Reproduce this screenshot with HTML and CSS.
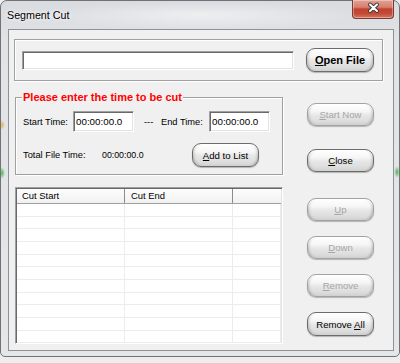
FILE: index.html
```html
<!DOCTYPE html>
<html lang="en">
<head>
    <meta charset="UTF-8">
    <meta name="viewport" content="width=device-width, initial-scale=1.0">
    <title>Segment Cut</title>
    <link rel="stylesheet" href="styles.css">
</head>
<body>
    <div class="window">
        <div class="titlebar">
            <span class="title">Segment Cut</span>
            <button class="btn-close" title="Close">
                <svg width="42" height="19" viewBox="0 0 42 19">
                    <path d="M18 5.5 L25 12 M25 5.5 L18 12" stroke="#3b3b3b" stroke-width="4" stroke-linecap="round"/>
                    <path d="M18 5.5 L25 12 M25 5.5 L18 12" stroke="#ffffff" stroke-width="2" stroke-linecap="round"/>
                </svg>
            </button>
        </div>

        <div class="client">
            <div class="group group-file">
                <input type="text" class="edit edit-path">
                <button class="btn btn-bold"><u>O</u>pen File</button>
            </div>

            <div class="main">
                <div class="left">
                    <fieldset class="group-time">
                        <legend>Please enter the time to be cut</legend>
                        <div class="row">
                            <label class="lbl-start">Start Time:</label>
                            <input type="text" class="edit edit-time" value="00:00:00.0">
                            <span class="dash">---</span>
                            <label class="lbl-end">End Time:</label>
                            <input type="text" class="edit edit-time" value="00:00:00.0">
                        </div>
                        <div class="row row-total">
                            <span class="lbl-total">Total File Time:</span>
                            <span class="total-value">00:00:00.0</span>
                            <button class="btn"><u>A</u>dd to List</button>
                        </div>
                    </fieldset>

                    <div class="listview">
                        <div class="lv-header">
                            <div class="lv-col">Cut Start</div>
                            <div class="lv-col">Cut End</div>
                            <div class="lv-col lv-fill"></div>
                        </div>
                        <div class="lv-body">
                            <div class="lv-row"><div class="lv-cell"></div><div class="lv-cell"></div><div class="lv-cell lv-fill"></div></div>
                            <div class="lv-row"><div class="lv-cell"></div><div class="lv-cell"></div><div class="lv-cell lv-fill"></div></div>
                            <div class="lv-row"><div class="lv-cell"></div><div class="lv-cell"></div><div class="lv-cell lv-fill"></div></div>
                            <div class="lv-row"><div class="lv-cell"></div><div class="lv-cell"></div><div class="lv-cell lv-fill"></div></div>
                            <div class="lv-row"><div class="lv-cell"></div><div class="lv-cell"></div><div class="lv-cell lv-fill"></div></div>
                            <div class="lv-row"><div class="lv-cell"></div><div class="lv-cell"></div><div class="lv-cell lv-fill"></div></div>
                            <div class="lv-row"><div class="lv-cell"></div><div class="lv-cell"></div><div class="lv-cell lv-fill"></div></div>
                            <div class="lv-row"><div class="lv-cell"></div><div class="lv-cell"></div><div class="lv-cell lv-fill"></div></div>
                            <div class="lv-row"><div class="lv-cell"></div><div class="lv-cell"></div><div class="lv-cell lv-fill"></div></div>
                            <div class="lv-row"><div class="lv-cell"></div><div class="lv-cell"></div><div class="lv-cell lv-fill"></div></div>
                            <div class="lv-row"><div class="lv-cell"></div><div class="lv-cell"></div><div class="lv-cell lv-fill"></div></div>
                        </div>
                    </div>
                </div>

                <div class="side">
                    <button class="btn btn-start" disabled><u>S</u>tart Now</button>
                    <button class="btn btn-closedlg"><u>C</u>lose</button>
                    <button class="btn btn-up" disabled><u>U</u>p</button>
                    <button class="btn btn-down" disabled><u>D</u>own</button>
                    <button class="btn btn-remove" disabled><u>R</u>emove</button>
                    <button class="btn btn-removeall">Remove <u>A</u>ll</button>
                </div>
            </div>
        </div>
    </div>
</body>
</html>
```

FILE: styles.css
```css
body {
    margin: 0;
    background-color: #ededed;
    font-family: "Liberation Sans", Arial, sans-serif;
    font-size: 9.3px;
    color: #000;
}
.window {
    width: 400px;
    height: 357px;
    box-sizing: border-box;
    padding: 0 5px 0 7px;
    border: 1px solid #707274;
    border-radius: 7px 7px 5px 5px;
    /* desktop colours bleeding through the glass frame */
    background:
        radial-gradient(3px 5px at 1px 124px, rgba(230,170,40,0.8), rgba(230,170,40,0)),
        radial-gradient(3px 6px at 1px 172px, rgba(40,170,40,0.8), rgba(40,170,40,0)),
        radial-gradient(3px 6px at 396px 171px, rgba(40,170,40,0.8), rgba(40,170,40,0)),
        radial-gradient(ellipse 160px 14px at 200px 14px, rgba(255,255,255,0.5), rgba(255,255,255,0)),
        linear-gradient(to bottom, #d8dbdf, #e1e3e6 40px, #e4e6e8);
}
.titlebar {
    height: 28px;
    display: flex;
    align-items: center;
    justify-content: space-between;
}
.title {
    margin-left: -1px;
    font-size: 10.7px;
    text-shadow: 0 0 6px #fff, 0 0 3px #fff;
}
.btn-close {
    align-self: flex-start;
    margin-top: -1px;
    width: 42px;
    height: 19px;
    padding: 0;
    border: 1px solid #7b3a33;
    border-top: none;
    border-radius: 0 0 4px 4px;
    background: linear-gradient(to bottom, #e2a194 0%, #d6806f 40%, #c4402f 50%, #c24a36 75%, #d8765a 100%);
    box-shadow: inset 0 0 0 1px rgba(255,255,255,0.35);
}
.btn-close svg {
    display: block;
    margin: -1px 0 0 -1px;
}
.client {
    height: 322px;
    box-sizing: border-box;
    padding: 9px 0 0 5px;
    border: 1px solid #8e9296;
    background-color: #f0f0f0;
}
.group {
    box-sizing: border-box;
    border: 1px solid #a0a0a0;
    box-shadow: inset 1px 1px 0 #fff, 1px 1px 0 #fff;
}
.group-file {
    width: 369px;
    height: 42px;
    display: flex;
    align-items: center;
    padding-left: 7px;
}
.edit {
    box-sizing: border-box;
    margin: 0;
    padding: 0 2px;
    border: 1px solid;
    border-color: #a0a0a0 #fff #fff #a0a0a0;
    box-shadow: inset 1px 1px 0 #696969, inset -1px -1px 0 #e3e3e3;
    background-color: #fff;
    font-family: "Liberation Sans", Arial, sans-serif;
    color: #000;
    outline: none;
}
.edit-path {
    width: 272px;
    height: 19px;
    margin-right: 12px;
}
.edit-time {
    width: 61px;
    height: 21px;
    font-size: 9.8px;
}
.btn {
    width: 67px;
    height: 23px;
    box-sizing: border-box;
    padding: 0;
    border: 1px solid #6c6c6c;
    border-radius: 9px;
    background: linear-gradient(to bottom, #ffffff 0%, #f6f6f6 35%, #e6e6e6 55%, #dcdcdc 85%, #e6e6e6 100%);
    box-shadow:
        inset 0 1px 0 #fff,
        inset 3px 0 3px -2px rgba(0,0,0,0.18),
        inset -3px 0 3px -2px rgba(0,0,0,0.18),
        inset 0 -2px 2px rgba(0,0,0,0.08),
        0 1px 1px rgba(0,0,0,0.25);
    font-family: "Liberation Sans", Arial, sans-serif;
    font-size: 9.6px;
    color: #000;
}
.btn:disabled {
    color: #a6a6a6;
    border-color: #a2a2a2;
}
.btn-bold {
    width: 68px;
    height: 24px;
    font-weight: bold;
    font-size: 11px;
}
.main {
    display: flex;
    margin-left: 1px;
}
.left {
    width: 268px;
}
.group-time {
    margin: 10px 0 0;
    padding: 7px 0 7px 7px;
    min-width: 0;
    border: 1px solid #a0a0a0;
    box-shadow: inset 1px 1px 0 #fff, 1px 1px 0 #fff;
}
.group-time legend {
    margin-left: -1px;
    padding: 0 1px;
    background-color: #f0f0f0;
    color: #ff0000;
    font-weight: bold;
    font-size: 11px;
    line-height: 13px;
}
.row {
    display: flex;
    align-items: center;
    height: 21px;
}
.lbl-start {
    width: 50px;
}
.dash {
    width: 27px;
    box-sizing: border-box;
    padding-left: 10px;
}
.lbl-end {
    width: 48px;
}
.row-total {
    height: 24px;
    margin-top: 11px;
}
.lbl-total {
    width: 79px;
}
.total-value {
    width: 90px;
    font-size: 8.8px;
}
.row-total .btn {
    height: 24px;
}
.listview {
    margin-top: 12px;
    height: 157px;
    box-sizing: border-box;
    overflow: hidden;
    border: 1px solid;
    border-color: #a0a0a0 #fff #fff #a0a0a0;
    box-shadow: inset 1px 1px 0 #696969, inset -1px -1px 0 #e3e3e3;
    padding: 1px;
    background-color: #fff;
}
.lv-header {
    display: flex;
    height: 15px;
    box-sizing: border-box;
    border-bottom: 1px solid #a0a0a0;
    background: linear-gradient(to bottom, #fdfdfd, #f1f1f1);
}
.lv-col {
    width: 108px;
    box-sizing: border-box;
    padding-left: 5px;
    border-right: 1px solid #8c8c8c;
    line-height: 14px;
    font-size: 9.45px;
}
.lv-col:nth-child(2) {
    padding-left: 6px;
}
.lv-fill {
    flex: 1;
    border-right: none;
}
.lv-row {
    display: flex;
    height: 12.67px;
    box-sizing: border-box;
    border-bottom: 1px solid #ececec;
}
.lv-cell {
    width: 108px;
    box-sizing: border-box;
    border-right: 1px solid #ececec;
}
.side {
    display: flex;
    flex-direction: column;
    margin-left: 24px;
}
.btn-start {
    margin-top: 22px;
}
.btn-closedlg {
    margin-top: 23px;
}
.btn-up {
    margin-top: 26px;
}
.btn-down,
.btn-remove,
.btn-removeall {
    margin-top: 15px;
}
.btn-removeall {
    height: 24px;
}
```
